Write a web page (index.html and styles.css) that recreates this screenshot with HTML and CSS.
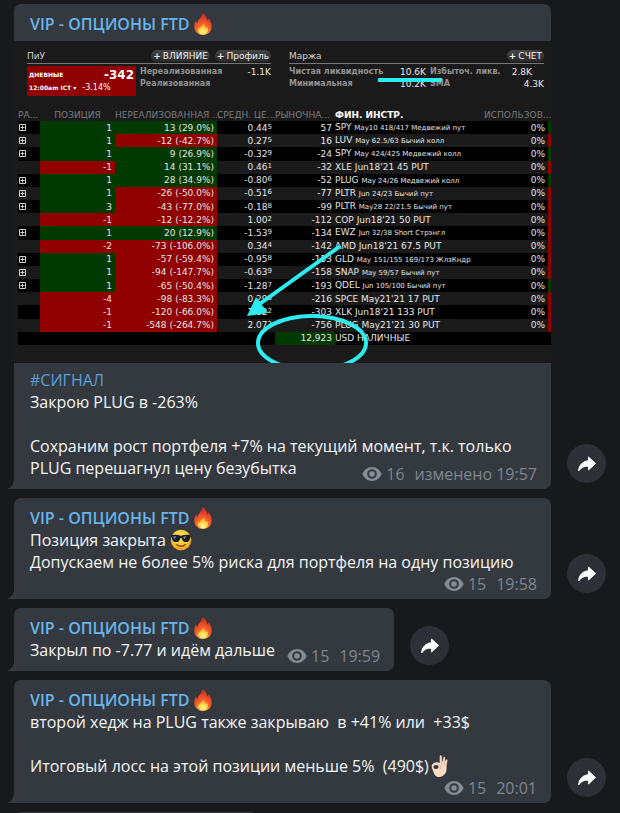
FILE: index.html
```html
<!DOCTYPE html>
<html lang="ru">
<head>
<meta charset="utf-8">
<meta name="viewport" content="width=device-width, initial-scale=1">
<title>VIP - ОПЦИОНЫ FTD</title>
<link rel="stylesheet" href="styles.css">
</head>
<body>
<svg class="defs" aria-hidden="true">
  <defs>
    <radialGradient id="flame" cx="50%" cy="90%" r="85%">
      <stop offset="0" stop-color="#ffb52e"/><stop offset=".4" stop-color="#f5702a"/><stop offset=".8" stop-color="#dc3a26"/><stop offset="1" stop-color="#c92f22"/>
    </radialGradient>
    <radialGradient id="core" cx="50%" cy="80%" r="75%">
      <stop offset="0" stop-color="#fff4a8"/><stop offset=".5" stop-color="#ffd84a"/><stop offset="1" stop-color="#fb9a2c"/>
    </radialGradient>
    <radialGradient id="face" cx="50%" cy="35%" r="65%">
      <stop offset="0" stop-color="#ffe95a"/><stop offset=".6" stop-color="#fdc831"/><stop offset="1" stop-color="#ef9a1c"/>
    </radialGradient>
    <symbol id="fire" viewBox="0 0 20 22">
      <path fill="url(#flame)" d="M9.500 0c2.800 1.600 4.800 4.400 4.600 7.800.8-.6 1.300-1.500 1.300-2.800 2.300 2.700 3.600 6.100 3.200 9.500-.5 4.600-4 7.500-8.600 7.500s-8.200-2.900-8.700-7.200C.9 11.500 1.900 9 3.300 7.300c0 1.400.2 2.300.9 3.200C4.600 6.300 9.300 4.700 9.500 0z"/>
      <path fill="url(#core)" d="M10.600 10.500c.3 1.900 2.400 3 2.600 5 .7-.4 1.100-1 1.200-1.800 2.100 4.100-.3 7.800-4.400 7.800s-6.300-3.500-4.600-7.300c.2 1 .8 1.500 1.400 1.800.2-2.300 3-3.200 3.800-5.500z"/>
    </symbol>
    <symbol id="cool" viewBox="0 0 22 22">
      <circle cx="11" cy="11" r="10.300" fill="url(#face)"/>
      <path fill="#17202a" d="M1 6.300c3.300-.7 6.800-.6 10 .5 3.200-1.100 6.700-1.200 10-.5l-.3 1.900c-.5.3-.6.700-.8 1.600-.5 2.500-1.800 3.400-4.100 3.300-2.500-.1-3.600-1.600-3.900-3.700-.1-.7-1.700-.7-1.800 0-.3 2.100-1.400 3.600-3.900 3.700-2.300.1-3.600-.8-4.100-3.300-.2-.9-.3-1.300-.8-1.600z"/>
      <path fill="#8d99a5" d="M3.300 7.600l3-.4-2.200 3zM13.300 7.700l3-.5-2.200 3z"/>
      <path d="M6.800 15.700c2.600 1.900 5.900 1.900 8.400-.2" fill="none" stroke="#74401a" stroke-width="1.300" stroke-linecap="round"/>
    </symbol>
    <symbol id="ok" viewBox="0 0 18 22">
      <path fill="#f9dcc4" d="M8.700 1.300c.5-1.400 2-1.200 2 .2l.2 5 .6.100.9-3.900c.4-1.300 1.900-1 1.700.4l-.5 4.600 1.100-2.700c.6-1.200 2-.6 1.700.7l-.9 5.600c.3 4-.2 6.400-2.400 8.400C11.600 21.200 9.700 22 7.300 22c-2 0-3.200-1.300-4.200-3.500L1 13.200C.3 11.200.6 9.500 2.200 8.400c1.700-1.200 4.400-1.400 6.500-.5z"/>
      <ellipse cx="5" cy="12" rx="2.600" ry="2" fill="#33393f"/>
      <path d="M7.600 9c2 1 2.600 2.900 1.700 5M10.900 6.500l-.1 3M13.600 7.700l-.5 2.500" fill="none" stroke="#c99c80" stroke-width=".7"/>
    </symbol>
    <symbol id="eye" viewBox="0 0 20 14">
      <path fill="currentColor" fill-rule="evenodd" d="M10 0c4.500 0 8 3 9.600 7-1.600 4-5.100 7-9.600 7S2 11 .4 7C2 3 5.500 0 10 0zm0 2.200a4.800 4.800 0 1 0 0 9.600 4.800 4.800 0 0 0 0-9.600zm0 2a2.800 2.800 0 1 1 0 5.600 2.800 2.800 0 0 1 0-5.600z"/>
    </symbol>
    <symbol id="share" viewBox="0 0 18 16">
      <path fill="#fff" stroke="#fff" stroke-linejoin="round" d="M10.500 1l7 6.500-7 6.500v-3.800C6 9.900 3.100 11.400.6 15 1 9.400 4.400 5.200 10.500 4.800z"/>
    </symbol>
    <symbol id="plusbox" viewBox="0 0 7 7">
      <path d="M.5.5h6v6h-6zM3.500 1.500v4M1.500 3.500h4" fill="none" stroke="#d0d0d0" stroke-width="1"/>
    </symbol>
  </defs>
</svg>

<main class="chat">
  <article class="message">
    <div class="bubble">
      <h2 class="author">VIP - ОПЦИОНЫ FTD<svg class="fire" role="img" aria-label="огонь"><use href="#fire"/></svg></h2>
      <section class="terminal">
        <div class="panels">
          <div class="panel panel-pnl">
            <div class="panel-head"><span>ПиУ</span><span class="pills"><button class="pill" type="button"><b>+</b>ВЛИЯНИЕ</button><button class="pill" type="button"><b>+</b>Профиль</button></span></div>
            <div class="pnl">
              <div class="daily">
                <span class="daily-row"><b>ДНЕВНЫЕ</b><strong>-342</strong></span>
                <span class="daily-row"><b>12:00am ICT ▾</b><span class="percent">-3.14%</span></span>
              </div>
              <dl class="stats"><dt>Нереализованная</dt><dd>-1.1K</dd><dt>Реализованная</dt><dd></dd></dl>
            </div>
          </div>
          <div class="panel panel-margin">
            <div class="panel-head"><span>Маржа</span><span class="pills"><button class="pill" type="button"><b>+</b>СЧЕТ</button></span></div>
            <dl class="stats margin-stats"><dt>Чистая ликвидность</dt><dd>10.6K</dd><dt>Избыточ. ликв.</dt><dd class="near">2.8K</dd><dt>Минимальная</dt><dd>10.2K</dd><dt>SMA</dt><dd>4.3K</dd></dl>
          </div>
        </div>
        <table class="positions">
          <colgroup><col class="c-exp"><col class="c-pos"><col class="c-unr"><col class="c-avg"><col class="c-mkt"><col><col class="c-use"><col class="c-bar"></colgroup>
          <thead><tr><th>РА...</th><th class="mid">ПОЗИЦИЯ</th><th>НЕРЕАЛИЗОВАННАЯ ...</th><th>СРЕДН. ЦЕ...</th><th>РЫНОЧНА...</th><th class="sorted">ФИН. ИНСТР.</th><th colspan="2" class="end">ИСПОЛЬЗОВ...</th></tr></thead>
          <tbody>
            <tr><td><svg class="box"><use href="#plusbox"/></svg></td><td class="up">1</td><td class="up">13 (29.0%)</td><td>0.44<i>5</i></td><td>57</td><td>SPY <small>May10 418/417 Медвежий пут</small></td><td>0%</td><td class="up"></td></tr>
            <tr><td><svg class="box"><use href="#plusbox"/></svg></td><td class="up">1</td><td class="down">-12 (-42.7%)</td><td>0.27<i>5</i></td><td>16</td><td>LUV <small>May 62.5/63 Бычий колл</small></td><td>0%</td><td class="down"></td></tr>
            <tr><td><svg class="box"><use href="#plusbox"/></svg></td><td class="up">1</td><td class="up">9 (26.9%)</td><td>-0.32<i>9</i></td><td>-24</td><td>SPY <small>May 424/425 Медвежий колл</small></td><td>0%</td><td class="up"></td></tr>
            <tr><td></td><td class="down">-1</td><td class="up">14 (31.1%)</td><td>0.46<i>1</i></td><td>-32</td><td>XLE Jun18'21 45 PUT</td><td>0%</td><td class="down"></td></tr>
            <tr><td><svg class="box"><use href="#plusbox"/></svg></td><td class="up">1</td><td class="up">28 (34.9%)</td><td>-0.80<i>6</i></td><td>-52</td><td>PLUG <small>May 24/26 Медвежий колл</small></td><td>0%</td><td class="up"></td></tr>
            <tr><td><svg class="box"><use href="#plusbox"/></svg></td><td class="up">1</td><td class="down">-26 (-50.0%)</td><td>-0.51<i>6</i></td><td>-77</td><td>PLTR <small>Jun 24/23 Бычий пут</small></td><td>0%</td><td class="down"></td></tr>
            <tr><td><svg class="box"><use href="#plusbox"/></svg></td><td class="up">3</td><td class="down">-43 (-77.0%)</td><td>-0.18<i>8</i></td><td>-99</td><td>PLTR <small>May28 22/21.5 Бычий пут</small></td><td>0%</td><td class="down"></td></tr>
            <tr><td></td><td class="down">-1</td><td class="down">-12 (-12.2%)</td><td>1.00<i>2</i></td><td>-112</td><td>COP Jun18'21 50 PUT</td><td>0%</td><td class="down"></td></tr>
            <tr><td><svg class="box"><use href="#plusbox"/></svg></td><td class="up">1</td><td class="up">20 (12.9%)</td><td>-1.53<i>9</i></td><td>-134</td><td>EWZ <small>Jun 32/38 Short Стрэнгл</small></td><td>0%</td><td class="down"></td></tr>
            <tr><td></td><td class="down">-2</td><td class="down">-73 (-106.0%)</td><td>0.34<i>4</i></td><td>-142</td><td>AMD Jun18'21 67.5 PUT</td><td>0%</td><td class="down"></td></tr>
            <tr><td><svg class="box"><use href="#plusbox"/></svg></td><td class="up">1</td><td class="down">-57 (-59.4%)</td><td>-0.95<i>8</i></td><td>-153</td><td>GLD <small>May 151/155 169/173 ЖлзКндр</small></td><td>0%</td><td class="down"></td></tr>
            <tr><td><svg class="box"><use href="#plusbox"/></svg></td><td class="up">1</td><td class="down">-94 (-147.7%)</td><td>-0.63<i>9</i></td><td>-158</td><td>SNAP <small>May 59/57 Бычий пут</small></td><td>0%</td><td class="down"></td></tr>
            <tr><td><svg class="box"><use href="#plusbox"/></svg></td><td class="up">1</td><td class="down">-65 (-50.4%)</td><td>-1.28<i>7</i></td><td>-193</td><td>QDEL <small>Jun 105/100 Бычий пут</small></td><td>0%</td><td class="up"></td></tr>
            <tr><td></td><td class="down">-4</td><td class="down">-98 (-83.3%)</td><td>0.29<i>5</i></td><td>-216</td><td>SPCE May21'21 17 PUT</td><td>0%</td><td class="down"></td></tr>
            <tr><td></td><td class="down">-1</td><td class="down">-120 (-66.0%)</td><td>1.82<i>2</i></td><td>-303</td><td>XLK Jun18'21 133 PUT</td><td>0%</td><td class="down"></td></tr>
            <tr><td></td><td class="down">-1</td><td class="down">-548 (-264.7%)</td><td>2.07<i>2</i></td><td>-756</td><td>PLUG May21'21 30 PUT</td><td>0%</td><td class="down"></td></tr>
            <tr><td></td><td></td><td></td><td></td><td class="up">12,923</td><td>USD НАЛИЧНЫЕ</td><td></td><td></td></tr>
          </tbody>
        </table>
        <svg class="marks" viewBox="0 0 537 322" aria-hidden="true">
          <g fill="none" stroke="#2cecf0">
            <path d="M364 39h64" stroke-width="4"/>
            <path d="M325 206L247 262" stroke-width="4" stroke-linecap="round"/>
            <ellipse cx="298" cy="302" rx="54" ry="27" stroke-width="4"/>
          </g>
          <path fill="#2cecf0" d="M233 275l9-19 12 16z"/>
        </svg>
      </section>
      <p class="text"><a class="tag" href="#signal">#СИГНАЛ</a><br>Закрою PLUG в -263%<br><br>Сохраним рост портфеля +7% на текущий момент, т.к. только<br>PLUG перешагнул цену безубытка</p>
      <footer class="meta tucked"><svg class="eye" role="img" aria-label="просмотры"><use href="#eye"/></svg><span>16</span><time>изменено 19:57</time></footer>
    </div>
    <button class="share" type="button" aria-label="Переслать"><svg><use href="#share"/></svg></button>
  </article>

  <article class="message">
    <div class="bubble">
      <h2 class="author">VIP - ОПЦИОНЫ FTD<svg class="fire" role="img" aria-label="огонь"><use href="#fire"/></svg></h2>
      <p class="text">Позиция закрыта <svg class="cool" role="img" aria-label="в очках"><use href="#cool"/></svg><br>Допускаем не более 5% риска для портфеля на одну позицию</p>
      <footer class="meta"><svg class="eye" role="img" aria-label="просмотры"><use href="#eye"/></svg><span>15</span><time>19:58</time></footer>
    </div>
    <button class="share" type="button" aria-label="Переслать"><svg><use href="#share"/></svg></button>
  </article>

  <article class="message">
    <div class="bubble compact">
      <h2 class="author">VIP - ОПЦИОНЫ FTD<svg class="fire" role="img" aria-label="огонь"><use href="#fire"/></svg></h2>
      <div class="line">
        <p class="text">Закрыл по -7.77 и идём дальше</p>
        <footer class="meta"><svg class="eye" role="img" aria-label="просмотры"><use href="#eye"/></svg><span>15</span><time>19:59</time></footer>
      </div>
    </div>
    <button class="share" type="button" aria-label="Переслать"><svg><use href="#share"/></svg></button>
  </article>

  <article class="message">
    <div class="bubble">
      <h2 class="author">VIP - ОПЦИОНЫ FTD<svg class="fire" role="img" aria-label="огонь"><use href="#fire"/></svg></h2>
      <p class="text">второй хедж на PLUG также закрываю&nbsp; в +41% или&nbsp; +33$<br><br>Итоговый лосс на этой позиции меньше 5%&nbsp; (490$)<svg class="ok" role="img" aria-label="окей"><use href="#ok"/></svg></p>
      <footer class="meta"><svg class="eye" role="img" aria-label="просмотры"><use href="#eye"/></svg><span>15</span><time>20:01</time></footer>
    </div>
    <button class="share" type="button" aria-label="Переслать"><svg><use href="#share"/></svg></button>
  </article>

  <div class="bubble upcoming"></div>
</main>
</body>
</html>
```
FILE: styles.css
```css
* { box-sizing: border-box; }

body {
  margin: 0;
  background: #17191d;
  color: #f4f5f6;
  font: 16px/22px "Open Sans", "Noto Sans", sans-serif;
}

.defs { position: absolute; width: 0; height: 0; }

.chat {
  display: flex;
  flex-direction: column;
  gap: 9px;
  height: 100vh;
  overflow: hidden;
  padding: 4px 14px 0;
}

.message {
  display: flex;
  flex: none;
  align-items: flex-end;
  gap: 16px;
}

.bubble {
  position: relative;
  flex: 1;
  min-width: 0;
  padding: 9px 0 4px;
  border-radius: 7px 7px 7px 0;
  background: #33393f;
}

.bubble.compact { flex: none; }

.bubble.upcoming {
  flex: none;
  width: 41%;
  height: 60px;
}

/* tail at the lower left corner */
.bubble::before {
  content: "";
  position: absolute;
  left: -8px;
  bottom: 0;
  width: 8px;
  height: 10px;
  background: radial-gradient(ellipse 8px 10px at 0 0, transparent 96%, #33393f 100%);
}

.author {
  display: flex;
  align-items: center;
  margin: 0;
  padding: 0 16px;
  color: #68b5ec;
  font-size: 16px;
  font-weight: 600;
  line-height: 22px;
}

.fire { width: 20px; height: 22px; margin-left: 4px; }
.cool { width: 22px; height: 22px; vertical-align: bottom; }
.ok { width: 18px; height: 22px; margin-left: 2px; vertical-align: bottom; }

.text { margin: 0; padding: 0 16px; }
.tag { color: #5c9fd9; text-decoration: none; }

.meta {
  display: flex;
  align-items: center;
  justify-content: flex-end;
  padding-right: 14px;
  color: #7f868c;
}

.meta.tucked { margin-top: -16px; }
.meta time { margin-left: 10px; }
.eye { width: 20px; height: 14px; margin-right: 4px; color: #858d94; }

.line { display: flex; align-items: flex-end; }
.line .text { padding-right: 12px; padding-bottom: 6px; }

.share {
  display: flex;
  flex: none;
  align-items: center;
  justify-content: center;
  width: 39px;
  height: 39px;
  margin: 0 0 6px;
  padding: 0;
  border: 0;
  border-radius: 50%;
  background: #2d3137;
}

.share svg { width: 18px; height: 16px; }

/* trading terminal */
.terminal {
  position: relative;
  margin: 6px 0;
  padding: 7px 0 18px;
  overflow: hidden;
  background: #1a1a1a;
  color: #e6e6e6;
  font: 9px/12px "DejaVu Sans", sans-serif;
}

.panels {
  display: flex;
  gap: 18px;
  height: 61px;
  padding: 0 7px 0 13px;
}

.panel-pnl { flex: 244; }
.panel-margin { flex: 255; }

.panel-head {
  display: flex;
  align-items: center;
  justify-content: space-between;
  height: 16px;
  margin-bottom: 2px;
  border-bottom: 1px solid #777;
  color: #d0d0d0;
}

.pills { display: flex; gap: 5px; }

.pill {
  display: flex;
  align-items: center;
  gap: 2px;
  height: 12px;
  padding: 0 2px;
  border: 0;
  border-radius: 6px;
  background: linear-gradient(#454545, #292929);
  color: #f0f0f0;
  font: 9px/12px "DejaVu Sans", sans-serif;
}

.pnl { display: flex; gap: 4px; }

.daily {
  display: flex;
  flex-direction: column;
  justify-content: space-between;
  width: 109px;
  height: 30px;
  padding: 2px;
  background: #910000;
  color: #fff;
}

.daily-row { display: flex; align-items: center; justify-content: space-between; }
.daily-row b { font-size: 6px; }
.daily-row strong { font-size: 12px; line-height: 14px; }
.percent { flex: 1; padding-left: 6px; font-size: 8px; }

.stats {
  display: grid;
  flex: 1;
  grid-template-columns: 1fr auto;
  align-content: start;
  margin: 0;
}

.stats dt { color: #929292; font-size: 8px; font-weight: bold; }
.stats dd { margin: 0; text-align: right; }
.margin-stats { grid-template-columns: 1fr auto 72px 38px; column-gap: 4px; }
.margin-stats dt { white-space: nowrap; }
.margin-stats .near { padding-right: 12px; }

.positions {
  width: 100%;
  height: 236px;
  padding-left: 4px;
  border-spacing: 0;
  table-layout: fixed;
}

.c-exp { width: 22px; }
.c-pos { width: 75px; }
.c-unr { width: 102px; }
.c-avg { width: 58px; }
.c-mkt { width: 60px; }
.c-use { width: 64px; }
.c-bar { width: 3px; }

.positions th {
  height: 12px;
  padding: 0;
  color: #7c7c7c;
  font-weight: normal;
  text-align: left;
  white-space: nowrap;
}

.positions th.mid { text-align: center; }
.positions th.end { padding-right: 4px; text-align: right; }
.positions th.sorted { color: #fff; font-weight: bold; }

.positions td {
  height: 13px;
  padding: 0 3px 0 0;
  text-align: right;
  white-space: nowrap;
}

.positions tbody tr:nth-child(odd) { background: #000; }
.positions td:first-child, .positions td:nth-child(6) { text-align: left; }
.positions td:last-child { padding: 0; }
.positions .up { background: #003a00; }
.positions .down { background: #910000; }
.positions small { font-size: 7px; }
.positions i { font-size: 7px; font-style: normal; vertical-align: 2px; line-height: 1; }
.box { display: block; width: 7px; height: 7px; margin-left: 1px; }

.marks {
  position: absolute;
  top: 0;
  left: 0;
  width: 100%;
}
```
